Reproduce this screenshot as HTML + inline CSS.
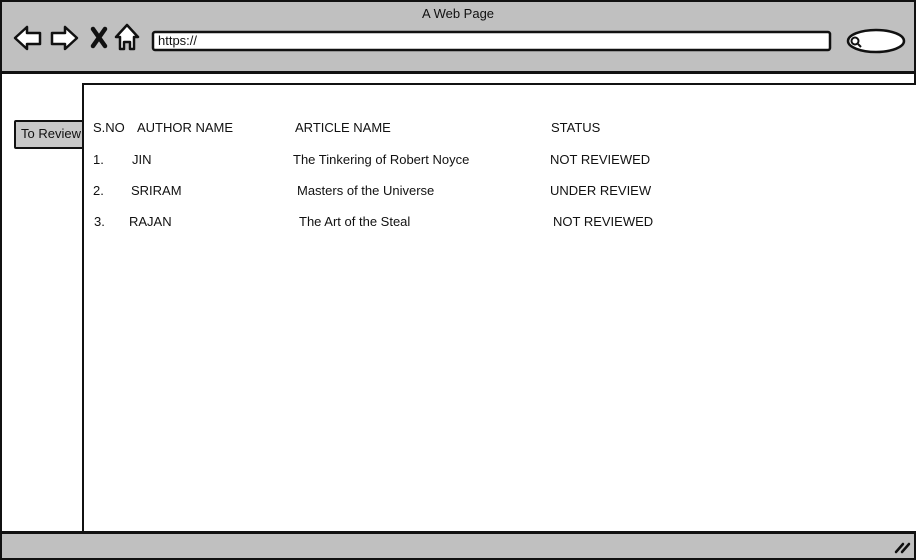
<!DOCTYPE html>
<html><head><meta charset="utf-8"><style>
html,body{margin:0;padding:0;}
body{width:916px;height:559px;position:relative;overflow:hidden;background:#fff;font-family:"Liberation Sans",sans-serif;font-size:13px;color:#111;}
.a{position:absolute;white-space:nowrap;}
</style></head><body>
<div class="a" style="left:0;top:0;width:912px;height:69px;background:#c0c0c0;border:2px solid #111;border-bottom:3px solid #111;"></div>
<div class="a" style="left:422px;top:6px;">A Web Page</div>
<svg class="a" style="left:0;top:0" width="916" height="72">
<g fill="#fff" stroke="#111" stroke-width="2.5" stroke-linejoin="round">
<path d="M15 38 L27 27 L27 33 L40 33 L40 44 L27 44 L27 49 Z"/>
<path d="M77 38 L65 27 L65 33 L52 33 L52 44 L65 44 L65 49 Z"/>
<path d="M127 25 L138 37 L134 37 L134 49 L130 49 L130 42 L124 42 L124 49 L120 49 L120 37 L116 37 Z"/>
<rect x="153" y="32" width="677" height="18" rx="2"/>
<ellipse cx="876" cy="41" rx="28" ry="11"/>
</g>
<path d="M93 29 L105 46 M105 29 L93 46" stroke="#111" stroke-width="4.5" stroke-linecap="round"/>
<circle cx="855" cy="41" r="3.5" fill="none" stroke="#111" stroke-width="2"/>
<path d="M858 44 L861 47" stroke="#111" stroke-width="2"/>
</svg>
<div class="a" style="left:158px;top:33px;">https://</div>
<div class="a" style="left:0;top:72px;width:2px;height:487px;background:#111;"></div>
<div class="a" style="left:914px;top:72px;width:2px;height:487px;background:#111;"></div>
<div class="a" style="left:14px;top:120px;width:70px;height:25px;background:#c8c8c8;border:2px solid #111;border-radius:2px;"></div>
<div class="a" style="left:21px;top:126px;">To Review</div>
<div class="a" style="left:82px;top:83px;width:834px;height:446px;background:#fff;border:2px solid #111;border-right:none;"></div>
<div class="a" style="left:0;top:531px;width:912px;height:24px;background:#c0c0c0;border:2px solid #111;border-top:3px solid #111;"></div>
<svg class="a" style="left:890px;top:536px" width="24" height="20"><path d="M6 16 L13 8 M12 16 L19 8" stroke="#111" stroke-width="2.5" stroke-linecap="round"/></svg>
<div class="a" style="left:93px;top:120px;">S.NO</div>
<div class="a" style="left:137px;top:120px;">AUTHOR NAME</div>
<div class="a" style="left:295px;top:120px;">ARTICLE NAME</div>
<div class="a" style="left:551px;top:120px;">STATUS</div>
<div class="a" style="left:93px;top:152px;">1.</div>
<div class="a" style="left:132px;top:152px;">JIN</div>
<div class="a" style="left:293px;top:152px;">The Tinkering of Robert Noyce</div>
<div class="a" style="left:550px;top:152px;">NOT REVIEWED</div>
<div class="a" style="left:93px;top:183px;">2.</div>
<div class="a" style="left:131px;top:183px;">SRIRAM</div>
<div class="a" style="left:297px;top:183px;">Masters of the Universe</div>
<div class="a" style="left:550px;top:183px;">UNDER REVIEW</div>
<div class="a" style="left:94px;top:214px;">3.</div>
<div class="a" style="left:129px;top:214px;">RAJAN</div>
<div class="a" style="left:299px;top:214px;">The Art of the Steal</div>
<div class="a" style="left:553px;top:214px;">NOT REVIEWED</div>
</body></html>
